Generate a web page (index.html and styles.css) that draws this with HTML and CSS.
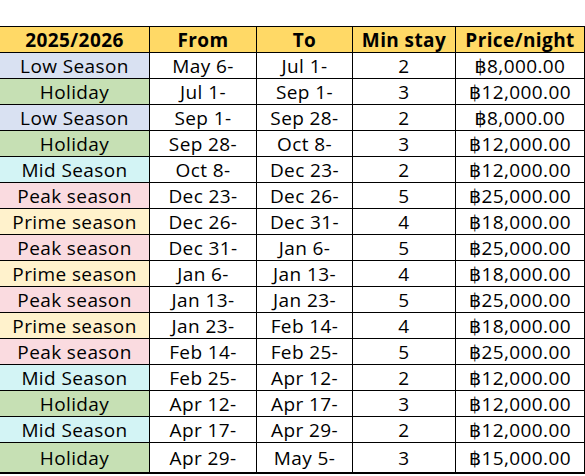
FILE: index.html
```html
<!DOCTYPE html>
<html>
<head>
<meta charset="utf-8">
<link rel="stylesheet" href="styles.css">
</head>
<body>
<div class="rates">
  <div class="c h">2025/2026</div><div class="c h">From</div><div class="c h">To</div><div class="c h">Min stay</div><div class="c h">Price/night</div>

  <div class="c low">Low Season</div><div class="c">May 6-</div><div class="c">Jul 1-</div><div class="c">2</div><div class="c">฿8,000.00</div>
  <div class="c hol">Holiday</div><div class="c">Jul 1-</div><div class="c">Sep 1-</div><div class="c">3</div><div class="c">฿12,000.00</div>
  <div class="c low">Low Season</div><div class="c">Sep 1-</div><div class="c">Sep 28-</div><div class="c">2</div><div class="c">฿8,000.00</div>
  <div class="c hol">Holiday</div><div class="c">Sep 28-</div><div class="c">Oct 8-</div><div class="c">3</div><div class="c">฿12,000.00</div>
  <div class="c mid">Mid Season</div><div class="c">Oct 8-</div><div class="c">Dec 23-</div><div class="c">2</div><div class="c">฿12,000.00</div>
  <div class="c peak">Peak season</div><div class="c">Dec 23-</div><div class="c">Dec 26-</div><div class="c">5</div><div class="c">฿25,000.00</div>
  <div class="c prime">Prime season</div><div class="c">Dec 26-</div><div class="c">Dec 31-</div><div class="c">4</div><div class="c">฿18,000.00</div>
  <div class="c peak">Peak season</div><div class="c">Dec 31-</div><div class="c">Jan 6-</div><div class="c">5</div><div class="c">฿25,000.00</div>
  <div class="c prime">Prime season</div><div class="c">Jan 6-</div><div class="c">Jan 13-</div><div class="c">4</div><div class="c">฿18,000.00</div>
  <div class="c peak">Peak season</div><div class="c">Jan 13-</div><div class="c">Jan 23-</div><div class="c">5</div><div class="c">฿25,000.00</div>
  <div class="c prime">Prime season</div><div class="c">Jan 23-</div><div class="c">Feb 14-</div><div class="c">4</div><div class="c">฿18,000.00</div>
  <div class="c peak">Peak season</div><div class="c">Feb 14-</div><div class="c">Feb 25-</div><div class="c">5</div><div class="c">฿25,000.00</div>
  <div class="c mid">Mid Season</div><div class="c">Feb 25-</div><div class="c">Apr 12-</div><div class="c">2</div><div class="c">฿12,000.00</div>
  <div class="c hol">Holiday</div><div class="c">Apr 12-</div><div class="c">Apr 17-</div><div class="c">3</div><div class="c">฿12,000.00</div>
  <div class="c mid">Mid Season</div><div class="c">Apr 17-</div><div class="c">Apr 29-</div><div class="c">2</div><div class="c">฿12,000.00</div>
  <div class="c hol last">Holiday</div><div class="c last">Apr 29-</div><div class="c last">May 5-</div><div class="c last">3</div><div class="c last">฿15,000.00</div>
</div>
</body>
</html>
```
FILE: styles.css
```css
html, body {
  margin: 0;
  padding: 0;
  background: #ffffff;
}
.rates {
  margin-top: 26px;
  display: grid;
  grid-template-columns: 150px 107px 96px 103px 129px;
  grid-template-rows: repeat(16, 26px) 31px;
  border-top: 1px solid #000;
  font-family: "Open Sans", "DejaVu Sans", sans-serif;
  font-size: 19px;
  letter-spacing: 0.4px;
  color: #000;
}
.c {
  box-sizing: border-box;
  border-right: 1px solid #000;
  border-bottom: 1px solid #000;
  display: flex;
  align-items: center;
  justify-content: center;
  white-space: nowrap;
  line-height: 1;
  padding-top: 2px;
}
.h {
  background: #ffd966;
  font-weight: bold;
}
.low { background: #d9e1f2; }
.hol { background: #c6e0b4; }
.mid { background: #d3f4f5; }
.peak { background: #fadbe0; }
.prime { background: #fff2cc; }
.last {
  border-bottom-width: 2px;
}
```
